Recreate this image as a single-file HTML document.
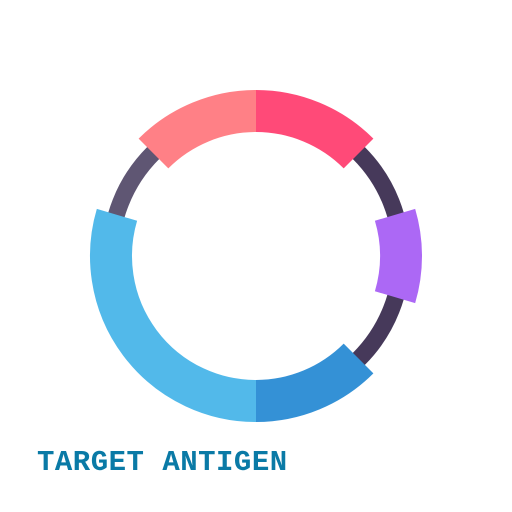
<!DOCTYPE html>
<html><head><style>
html,body{margin:0;padding:0;background:#fff;width:512px;height:512px;overflow:hidden;}
svg{position:absolute;left:0;top:0;}
.t{position:absolute;left:37px;top:445px;font:bold 29px "Liberation Mono",monospace;color:#0a7aa6;line-height:36px;white-space:pre;letter-spacing:0.5px;}
</style></head><body>
<svg width="512" height="512" viewBox="0 0 512 512">
<g fill="none">
<path d="M256 401.5 A145.5 145.5 0 0 1 256 110.5" stroke="#5f5673" stroke-width="17"/>
<path d="M256 110.5 A145.5 145.5 0 0 1 256 401.5" stroke="#46395a" stroke-width="17"/>
<g stroke-width="42">
<path d="M153.47 153.47 A145 145 0 0 1 256 111" stroke="#ff8086"/>
<path d="M256 111 A145 145 0 0 1 358.53 153.47" stroke="#ff4a78"/>
<path d="M395.03 214.82 A145 145 0 0 1 395.03 297.18" stroke="#ac68f5"/>
<path d="M358.53 358.53 A145 145 0 0 1 256 401" stroke="#3491d6"/>
<path d="M256 401 A145 145 0 0 1 116.97 214.82" stroke="#52b9ea"/>
</g>
</g>
</svg>
<div class="t">TARGET ANTIGEN</div>
</body></html>
